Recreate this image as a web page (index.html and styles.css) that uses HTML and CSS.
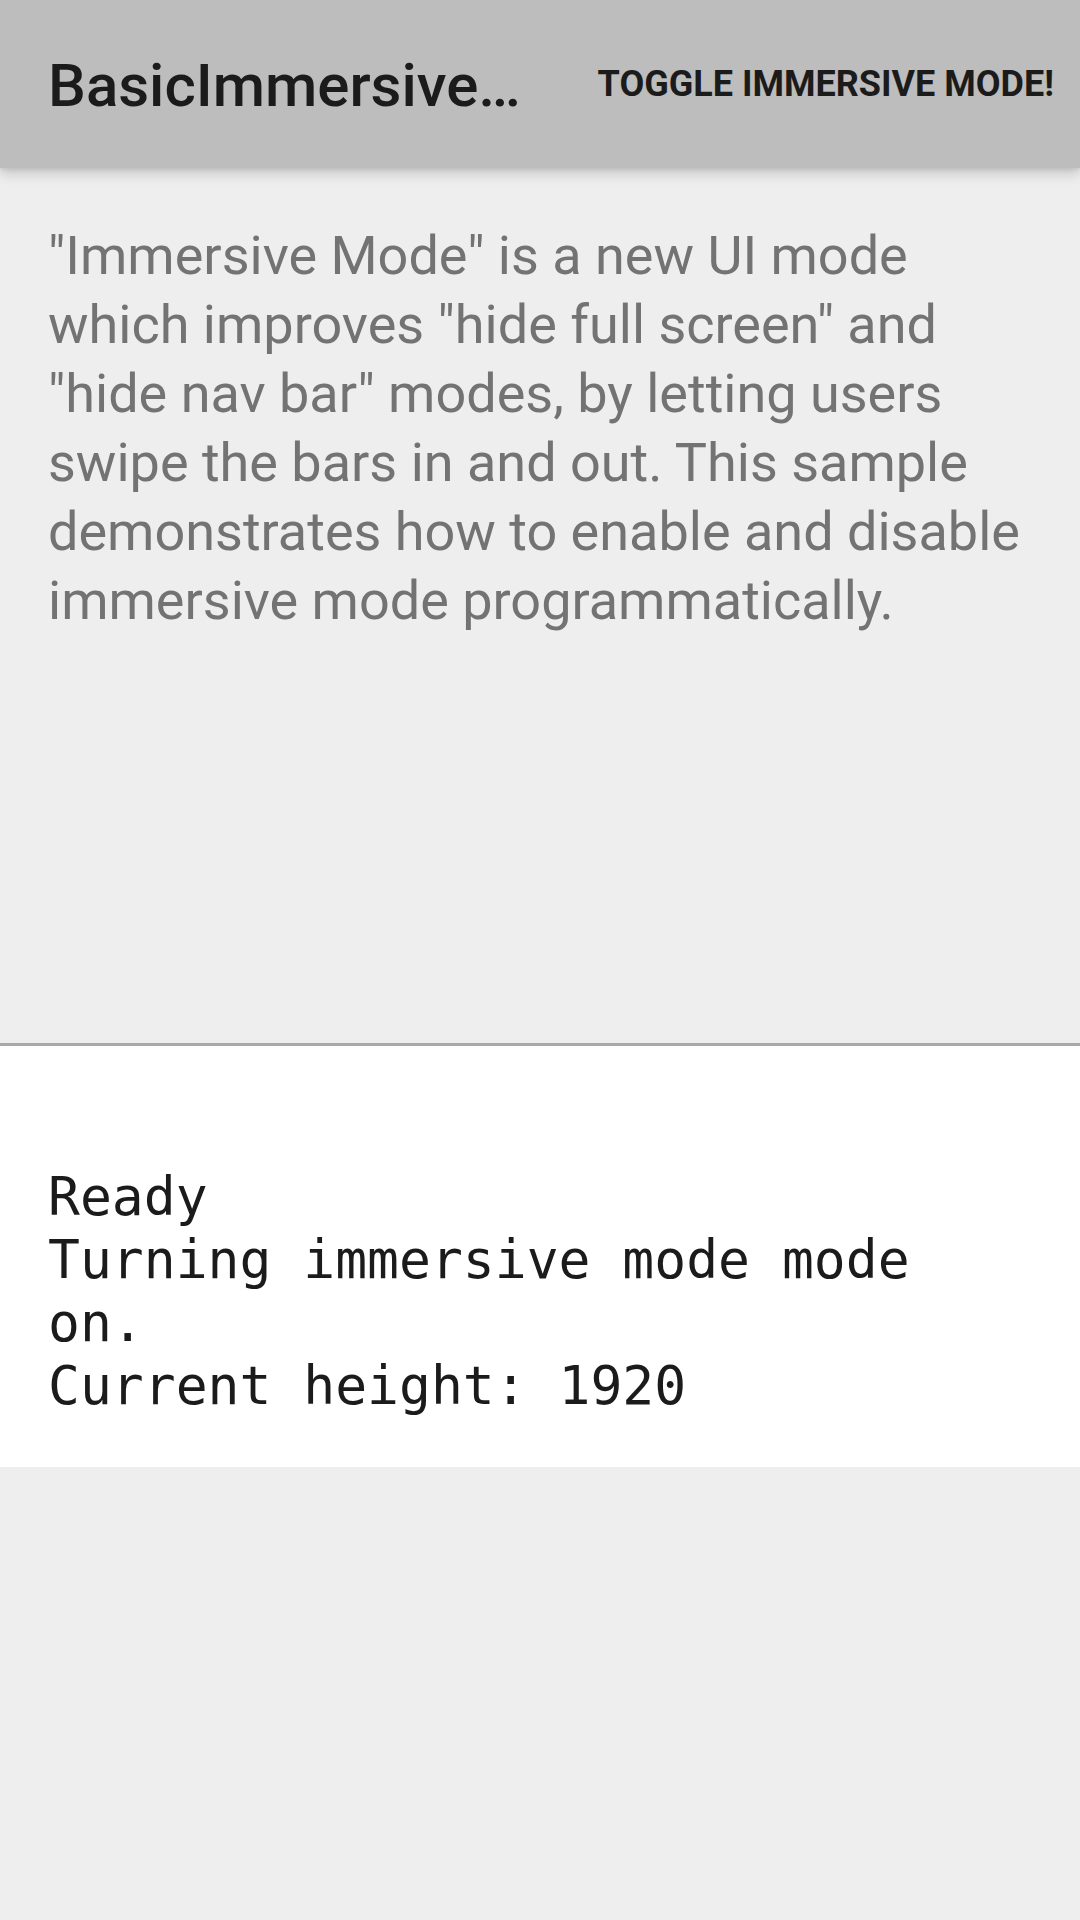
FILE: index.html
```html
<!DOCTYPE html>
<html>
<head>
<meta charset="utf-8">
<link rel="stylesheet" href="styles.css">
</head>
<body>
<div class="screen">
  <header class="appbar">
    <div class="title">BasicImmersive…</div>
    <div class="action">TOGGLE IMMERSIVE MODE!</div>
  </header>
  <main class="content">
    <section class="intro">
      <p class="intro-text">"Immersive Mode" is a new UI mode which improves "hide full screen" and "hide nav bar" modes, by letting users swipe the bars in and out. This sample demonstrates how to enable and disable immersive mode programmatically.</p>
    </section>
    <div class="divider"></div>
    <section class="log">
      <div class="log-text">Ready<br>Turning immersive mode mode on.<br>Current height: 1920</div>
    </section>
  </main>
</div>
</body>
</html>
```

FILE: styles.css
```css
html, body {
  margin: 0;
  padding: 0;
  background: #eeeeee;
}
.screen {
  width: 1080px;
  height: 1920px;
  background: #eeeeee;
  display: flex;
  flex-direction: column;
  overflow: hidden;
}
.appbar {
  position: relative;
  z-index: 2;
  height: 168px;
  flex: 0 0 168px;
  background: #bdbdbd;
  display: flex;
  align-items: center;
  justify-content: space-between;
  padding: 0 26px 0 48px;
  box-sizing: border-box;
  box-shadow: 0 6px 12px rgba(0,0,0,0.16), 0 2px 4px rgba(0,0,0,0.08);
}
.title {
  flex: 0 1 auto;
  font-family: Roboto, "Noto Sans", sans-serif;
  font-weight: 500;
  font-size: 60px;
  color: #1b1b1b;
  white-space: nowrap;
  margin-top: 2px;
}
.action {
  flex: 0 0 auto;
  font-family: Roboto, "Noto Sans", sans-serif;
  font-weight: 700;
  font-size: 36px;
  color: #1b1b1b;
  white-space: nowrap;
  margin-top: 0;
}
.content {
  flex: 1 1 auto;
  display: flex;
  flex-direction: column;
}
.intro {
  height: 875px;
  box-sizing: border-box;
  padding: 53px 48px 0 48px;
}
.intro-text {
  margin: 0;
  font-family: Roboto, "Noto Sans", sans-serif;
  font-size: 54px;
  line-height: 69px;
  color: #737373;
}
.divider {
  height: 3px;
  background: #a8a8a8;
}
.log {
  background: #ffffff;
  padding: 119px 48px 50px 48px;
}
.log-text {
  font-family: "DejaVu Sans Mono", "Liberation Mono", monospace;
  font-size: 53px;
  line-height: 63px;
  color: #1b1b1b;
}
```
